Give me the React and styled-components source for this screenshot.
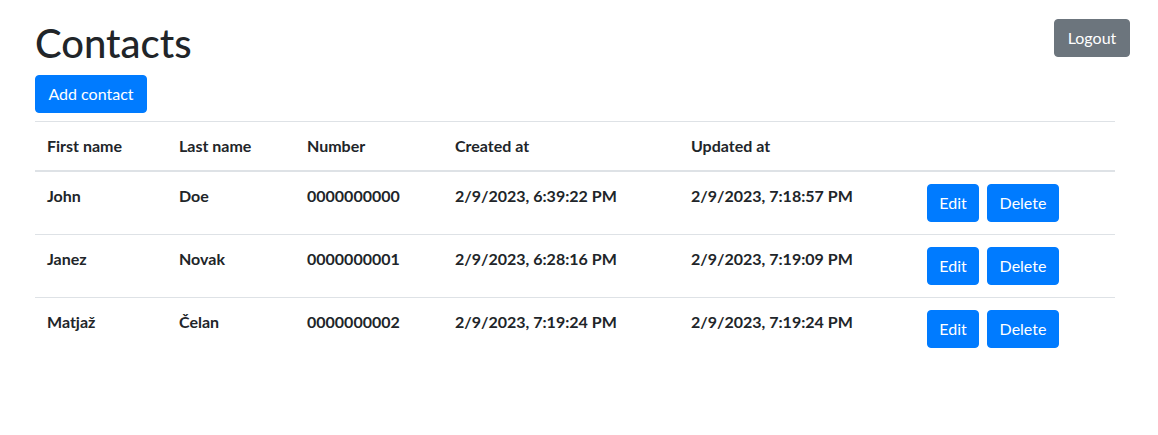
import React from "react";
import styled, { createGlobalStyle } from "styled-components";

const Global = createGlobalStyle`
  html, body { margin: 0; padding: 0; background: #fff; }
  body {
    font-family: "Lato", "Noto Sans", sans-serif;
    font-size: 16px;
    line-height: 1.5;
    color: #212529;
  }
  * { box-sizing: border-box; }
`;

const Page = styled.div`
  padding: 19px 0 0 35px;
`;

const Main = styled.main`
  width: 1080px;
`;

const TopBar = styled.header`
  display: flex;
  justify-content: space-between;
  align-items: flex-start;
`;

const Title = styled.h1`
  margin: 0 0 8px;
  font-size: 40px;
  font-weight: 500;
  line-height: 1.2;
`;

const Button = styled.button`
  display: inline-block;
  font-family: inherit;
  font-size: 16px;
  font-weight: 400;
  line-height: 24px;
  padding: 6px 0;
  text-align: center;
  border: 1px solid ${(p) => (p.$variant === "secondary" ? "#6c757d" : "#007bff")};
  background: ${(p) => (p.$variant === "secondary" ? "#6c757d" : "#007bff")};
  color: #fff;
  border-radius: 4px;
  cursor: pointer;
  width: ${(p) => p.$w}px;
  flex: none;
`;

const LogoutButton = styled(Button)`
  margin-right: -15px;
`;

const Table = styled.table`
  width: 100%;
  margin-top: 8px;
  border-collapse: collapse;
  table-layout: fixed;
`;

const Th = styled.th`
  text-align: left;
  padding: 12px;
  border-top: 1px solid #dee2e6;
  border-bottom: 2px solid #dee2e6;
  font-weight: 700;
  vertical-align: bottom;
  width: ${(p) => (p.$w ? `${p.$w}px` : "auto")};
`;

const Td = styled.td`
  padding: 12px;
  border-top: 1px solid #dee2e6;
  font-weight: 700;
  vertical-align: top;
  white-space: nowrap;
`;

const Actions = styled.div`
  display: flex;
  gap: 8px;
`;

const cols = [
  ["First name", 132],
  ["Last name", 128],
  ["Number", 148],
  ["Created at", 236],
  ["Updated at", 236],
  ["", null],
];

const rows = [
  ["John", "Doe", "0000000000", "2/9/2023, 6:39:22 PM", "2/9/2023, 7:18:57 PM"],
  ["Janez", "Novak", "0000000001", "2/9/2023, 6:28:16 PM", "2/9/2023, 7:19:09 PM"],
  ["Matjaž", "Čelan", "0000000002", "2/9/2023, 7:19:24 PM", "2/9/2023, 7:19:24 PM"],
];

export default function App() {
  return (
    <>
      <Global />
      <Page>
        <Main>
          <TopBar>
            <Title>Contacts</Title>
            <LogoutButton $variant="secondary" $w={76}>Logout</LogoutButton>
          </TopBar>
          <Button $w={112}>Add contact</Button>
          <Table>
            <thead>
              <tr>
                {cols.map(([c, w], i) => (
                  <Th key={i} $w={w}>{c}</Th>
                ))}
              </tr>
            </thead>
            <tbody>
              {rows.map((r, i) => (
                <tr key={i}>
                  {r.map((c, j) => (
                    <Td key={j}>{c}</Td>
                  ))}
                  <Td>
                    <Actions>
                      <Button $w={52}>Edit</Button>
                      <Button $w={72}>Delete</Button>
                    </Actions>
                  </Td>
                </tr>
              ))}
            </tbody>
          </Table>
        </Main>
      </Page>
    </>
  );
}
